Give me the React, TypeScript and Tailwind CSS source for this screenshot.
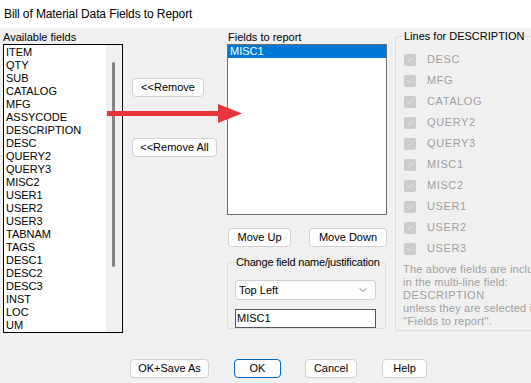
import { ChevronDown, Check } from 'lucide-react';

const available = [
  'ITEM', 'QTY', 'SUB', 'CATALOG', 'MFG', 'ASSYCODE', 'DESCRIPTION', 'DESC', 'QUERY2', 'QUERY3', 'MISC2',
  'USER1', 'USER2', 'USER3', 'TABNAM', 'TAGS', 'DESC1', 'DESC2', 'DESC3', 'INST', 'LOC', 'UM',
];

const descLines = ['DESC', 'MFG', 'CATALOG', 'QUERY2', 'QUERY3', 'MISC1', 'MISC2', 'USER1', 'USER2', 'USER3'];

function Btn({ label, className = '' }: { label: string; className?: string }) {
  return (
    <button
      className={`h-[19px] shrink-0 rounded-[4px] border bg-[#fdfdfd] text-[11px] leading-none text-black ${className}`}
    >
      {label}
    </button>
  );
}

export default function App() {
  return (
    <div
      className="relative h-[383px] w-[531px] overflow-hidden bg-[#f0f0f0] text-black"
      style={{ fontFamily: '"Liberation Sans", Arial, sans-serif' }}
    >
      {/* Title bar */}
      <div className="flex h-[28px] items-center bg-white pl-[4px] text-[12px] tracking-[-0.1px]">
        Bill of Material Data Fields to Report
      </div>

      <div className="flex h-[303px] pl-[3px]">
        {/* Available fields */}
        <div className="flex w-[120px] shrink-0 flex-col">
          <div className="mt-[2px] h-[14px] text-[11px] leading-[14px]">Available fields</div>
          <div className="flex flex-1 border border-black bg-white">
            <div className="flex-1 pl-[2px] pt-[1px]">
              {available.map((f) => (
                <div key={f} className="h-[13px] text-[11px] leading-[13px]">
                  {f}
                </div>
              ))}
            </div>
            <div className="w-[16px] bg-[#f0f0f0] pt-[17px]">
              <div className="ml-[6px] h-[205px] w-[3px] rounded-full bg-[#858585]" />
            </div>
          </div>
        </div>

        {/* Remove buttons */}
        <div className="ml-[9px] flex w-[86px] shrink-0 flex-col items-start pt-[50px]">
          <Btn label="<<Remove" className="w-[72px] border-[#d0d0d0]" />
          <Btn label="<<Remove All" className="mt-[41px] w-[85px] border-[#d0d0d0]" />
        </div>

        {/* Fields to report */}
        <div className="ml-[9px] flex w-[160px] shrink-0 flex-col">
          <div className="mt-[2px] h-[14px] pl-[1px] text-[11px] leading-[14px]">Fields to report</div>
          <div className="h-[171px] border border-[#6e6e6e] bg-white">
            <div className="h-[13px] bg-[#0078d7] pl-[2px] text-[11px] leading-[13px] text-white">MISC1</div>
          </div>
          <div className="mt-[13px] flex justify-between pl-[1px]">
            <Btn label="Move Up" className="w-[63px] border-[#d0d0d0]" />
            <Btn label="Move Down" className="w-[78px] border-[#d0d0d0]" />
          </div>
          <fieldset className="mt-[8px] h-[74px] w-[159px] rounded-[3px] border border-[#dcdcdc] pl-[7px]">
            <legend className="whitespace-nowrap px-[1px] text-[11px] leading-[14px] tracking-[-0.2px]">
              Change field name/justification
            </legend>
            <div className="mt-[11px] flex h-[20px] w-[141px] items-center justify-between rounded-[3px] border border-[#d0d0d0] bg-[#fdfdfd] pl-[3px] pr-[6px] text-[11px]">
              <span>Top Left</span>
              <ChevronDown className="h-[12px] w-[12px] text-[#555]" strokeWidth={1.5} />
            </div>
            <div className="mt-[9px] flex h-[19px] w-[141px] items-center border border-[#555] bg-white pl-[1px] text-[11px]">
              MISC1
            </div>
          </fieldset>
        </div>

        {/* Lines for DESCRIPTION */}
        <fieldset className="ml-[8px] mt-[1px] h-[302px] w-[150px] shrink-0 rounded-[3px] border border-[#dcdcdc] pl-[7px]">
          <legend className="whitespace-nowrap px-[1px] text-[11px] leading-[14px]">Lines for DESCRIPTION</legend>
          <div className="pt-[6px]">
            {descLines.map((l) => (
              <div key={l} className="flex h-[21px] items-center">
                <div className="ml-[1px] flex h-[12px] w-[12px] items-center justify-center rounded-[2px] bg-[#cccccc]">
                  <Check className="h-[8px] w-[8px] text-[#e6e6e6]" strokeWidth={3} />
                </div>
                <span className="ml-[11px] text-[11px] tracking-[0.6px] text-[#a0a0a0]">{l}</span>
              </div>
            ))}
          </div>
          <div className="mt-[4px] whitespace-nowrap text-[11px] leading-[13px] tracking-[0.2px] text-[#a0a0a0]">
            <div>The above fields are included</div>
            <div>in the multi-line field:</div>
            <div className="tracking-[0.6px]">DESCRIPTION</div>
            <div>unless they are selected in</div>
            <div>''Fields to report''.</div>
          </div>
        </fieldset>
      </div>

      {/* Bottom buttons */}
      <div className="mt-[28px] flex pl-[130px]">
        <Btn label="OK+Save As" className="w-[79px] border-[#d0d0d0]" />
        <Btn label="OK" className="ml-[25px] w-[47px] border-[#0067c0]" />
        <Btn label="Cancel" className="ml-[24px] w-[52px] border-[#d0d0d0]" />
        <Btn label="Help" className="ml-[25px] w-[45px] border-[#d0d0d0]" />
      </div>

      {/* Red arrow overlay */}
      <svg className="absolute left-[107px] top-[103px]" width="136" height="22" viewBox="0 0 136 22">
        <rect x="0" y="8" width="115" height="5" fill="#e8353a" />
        <polygon points="111,1 135,10.5 111,20" fill="#e8353a" />
      </svg>
    </div>
  );
}
